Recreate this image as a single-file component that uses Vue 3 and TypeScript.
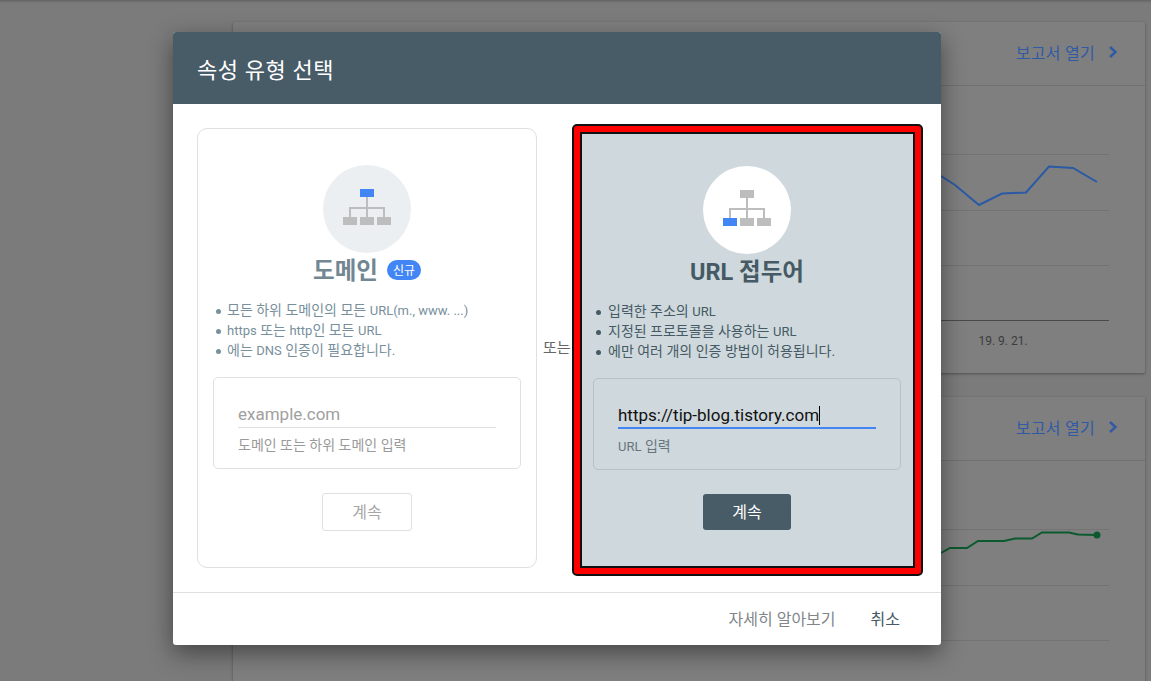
<template>
  <div class="page">
    <div class="report-card">
      <div class="report-head">
        <a class="open-link">보고서 열기</a>
        <svg class="chevron" width="12" height="14" viewBox="0 0 12 14"><path d="M3 2l5.5 5-5.5 5" /></svg>
      </div>
      <svg class="chart" width="912" height="287">
        <line v-for="y in gridLines" :key="y" x1="0" x2="876" :y1="y" :y2="y" class="grid" />
        <line x1="0" x2="876" y1="234.5" y2="234.5" class="axis" />
        <polyline :points="bluePoints" class="blue-line" />
        <text x="770" y="259" text-anchor="middle" class="date">19. 9. 21.</text>
      </svg>
    </div>

    <div class="report-card second">
      <div class="report-head">
        <a class="open-link">보고서 열기</a>
        <svg class="chevron" width="12" height="14" viewBox="0 0 12 14"><path d="M3 2l5.5 5-5.5 5" /></svg>
      </div>
      <svg class="chart" width="912" height="287">
        <line v-for="y in gridLines" :key="y" x1="0" x2="876" :y1="y" :y2="y" class="grid" />
        <polyline :points="greenPoints" class="green-line" />
        <circle cx="864" cy="74" r="3.5" class="green-dot" />
      </svg>
    </div>

    <div class="modal">
      <div class="modal-title">속성 유형 선택</div>
      <div class="modal-body">
        <div class="option">
          <div class="circle">
            <svg width="48" height="36" viewBox="0 0 48 36">
              <rect x="17" y="0" width="14" height="8" fill="#4285f4" />
              <path d="M24 8v20M7 28v-9h34v9" class="tree" />
              <rect x="0" y="28" width="14" height="8" fill="#bdbdbd" />
              <rect x="17" y="28" width="14" height="8" fill="#bdbdbd" />
              <rect x="34" y="28" width="14" height="8" fill="#bdbdbd" />
            </svg>
          </div>
          <div class="option-title">
            <span>도메인</span>
            <span class="badge">신규</span>
          </div>
          <ul class="points">
            <li>모든 하위 도메인의 모든 <span class="lat">URL(m., www. ...)</span></li>
            <li><span class="lat">https</span> 또는 <span class="lat">http</span>인 모든 <span class="lat">URL</span></li>
            <li>에는 <span class="lat">DNS</span> 인증이 필요합니다.</li>
          </ul>
          <div class="input-box">
            <div class="input-line placeholder">example.com</div>
            <div class="hint">도메인 또는 하위 도메인 입력</div>
          </div>
          <button class="continue" type="button">계속</button>
        </div>

        <div class="or">또는</div>

        <div class="marked">
          <div class="option selected">
            <div class="circle">
              <svg width="48" height="36" viewBox="0 0 48 36">
                <rect x="17" y="0" width="14" height="8" fill="#bdbdbd" />
                <path d="M24 8v20M7 28v-9h34v9" class="tree" />
                <rect x="0" y="28" width="14" height="8" fill="#4285f4" />
                <rect x="17" y="28" width="14" height="8" fill="#bdbdbd" />
                <rect x="34" y="28" width="14" height="8" fill="#bdbdbd" />
              </svg>
            </div>
            <div class="option-title">
              <span>URL 접두어</span>
            </div>
            <ul class="points">
              <li>입력한 주소의 <span class="lat">URL</span></li>
              <li>지정된 프로토콜을 사용하는 <span class="lat">URL</span></li>
              <li>에만 여러 개의 인증 방법이 허용됩니다.</li>
            </ul>
            <div class="input-box">
              <div class="input-line filled">https://tip-blog.tistory.com<span class="caret"></span></div>
              <div class="hint"><span class="lat">URL</span> 입력</div>
            </div>
            <button class="continue" type="button">계속</button>
          </div>
        </div>
      </div>
      <div class="modal-foot">
        <a class="learn">자세히 알아보기</a>
        <a class="cancel">취소</a>
      </div>
    </div>
  </div>
</template>

<script setup lang="ts">
type Point = [number, number];

const gridLines = [68.5, 124.5, 179.5];

// page coordinates of the visible part of each line
const blue: Point[] = [
  [941, 176], [955, 185], [979, 205], [1002, 193.5], [1026, 192.5], [1049, 166.5], [1073, 168], [1097, 182],
];
const green: Point[] = [
  [941, 553], [950, 548], [967, 548], [978, 541], [1004, 541], [1015, 538.5], [1032, 538.5], [1042, 532.5], [1069, 532.5], [1078, 534.5], [1097, 535],
];

function toChart(points: Point[], top: number): string {
  return points.map(([x, y]) => `${x - 233},${y - top}`).join(" ");
}

const bluePoints = toChart(blue, 86);
const greenPoints = toChart(green, 461);
</script>

<style>
html,
body {
  margin: 0;
  background: #7b7b7b;
}
</style>

<style scoped>
.page {
  position: relative;
  height: 681px;
  overflow: hidden;
  box-sizing: border-box;
  padding: 22px 6px 0 233px;
  background: #7b7b7b;
  box-shadow: inset 0 3px 3px -2px rgba(0, 0, 0, 0.25);
  font-family: Roboto, "Noto Sans CJK KR", sans-serif;
}

.report-card {
  height: 351px;
  margin-bottom: 24px;
  background: #7f7f7f;
  border-radius: 2px;
  box-shadow: 0 1px 3px rgba(0, 0, 0, 0.35);
}

.report-card.second {
  height: 400px;
}

.report-head {
  display: flex;
  align-items: center;
  justify-content: flex-end;
  gap: 12px;
  box-sizing: border-box;
  height: 64px;
  padding: 0 26px 3px 0;
  border-bottom: 1px solid #707070;
}

.open-link {
  font-size: 16px;
  letter-spacing: 0.3px;
  color: #2f5aa6;
}

.chevron path {
  fill: none;
  stroke: #2f5aa6;
  stroke-width: 2.4;
}

.chart {
  display: block;
}

.grid {
  stroke: #737373;
  stroke-width: 1;
}

.axis {
  stroke: #4a4a4a;
  stroke-width: 1;
}

.blue-line {
  fill: none;
  stroke: #2c59a5;
  stroke-width: 2;
}

.green-line {
  fill: none;
  stroke: #0b5a2f;
  stroke-width: 2;
}

.green-dot {
  fill: #0b5a2f;
}

.date {
  font-size: 12px;
  fill: #3c3c3c;
}

.modal {
  position: absolute;
  left: 173px;
  top: 32px;
  display: flex;
  flex-direction: column;
  width: 768px;
  height: 613px;
  background: #fff;
  border-radius: 3px;
  box-shadow: 0 8px 24px rgba(0, 0, 0, 0.45);
}

.modal-title {
  box-sizing: border-box;
  height: 72px;
  padding: 0 24px;
  border-radius: 3px 3px 0 0;
  background: #485c67;
  color: #fff;
  font-size: 22px;
  letter-spacing: 0.6px;
  line-height: 78px;
}

.modal-body {
  display: flex;
  align-items: flex-start;
  flex: 1;
  padding: 24px 18px 0 24px;
}

.option {
  display: flex;
  flex-direction: column;
  align-items: center;
  box-sizing: border-box;
  width: 340px;
  height: 440px;
  padding: 36px 15px 0;
  border: 1px solid #e0e0e0;
  border-radius: 10px;
}

.or {
  width: 35px;
  padding: 210px 0 0 6px;
  box-sizing: border-box;
  font-size: 15px;
  line-height: 20px;
  color: #666;
  white-space: nowrap;
}

.marked {
  box-sizing: border-box;
  width: 351px;
  height: 452px;
  margin: -4px 0 0;
  padding: 6px;
  background: #f00;
  border: 2px solid #111;
  border-radius: 5px;
}

.option.selected {
  width: 100%;
  height: 100%;
  padding: 32px 12px 0 11px;
  background: #cfd8dc;
  border: 2px solid #111;
  border-radius: 0;
}

.circle {
  display: flex;
  align-items: center;
  justify-content: center;
  flex: none;
  width: 88px;
  height: 88px;
  border-radius: 50%;
  background: #eceff1;
}

.circle svg {
  margin-bottom: 4px;
}

.selected .circle {
  background: #fff;
}

.tree {
  fill: none;
  stroke: #bdbdbd;
  stroke-width: 2;
}

.option-title {
  display: flex;
  align-items: center;
  gap: 9px;
  height: 30px;
  margin-top: 1px;
  font-size: 23.5px;
  font-weight: 700;
  color: #718792;
  white-space: nowrap;
}

.selected .option-title {
  color: #455a64;
}

.badge {
  display: flex;
  align-items: center;
  justify-content: center;
  width: 34px;
  height: 20px;
  margin-top: 1px;
  border-radius: 10px;
  background: #4285f4;
  color: #fff;
  font-size: 12px;
  font-weight: 400;
}

.points {
  align-self: stretch;
  margin: 16px 0 17px;
  padding: 0 0 0 14px;
  list-style: none;
  font-size: 14px;
  line-height: 20px;
  color: #78909c;
}

.points li {
  position: relative;
  height: 20px;
  white-space: nowrap;
}

.points li::before {
  content: "";
  position: absolute;
  left: -11px;
  top: 9px;
  width: 5px;
  height: 5px;
  border-radius: 50%;
  background: currentColor;
}

.selected .points {
  padding-left: 15px;
  color: #455a64;
}

.selected .points li::before {
  left: -12px;
}

.lat {
  font-size: 13px;
}

.input-box {
  align-self: stretch;
  box-sizing: border-box;
  height: 92px;
  padding: 24px 24px 0;
  border: 1px solid #e0e0e0;
  border-radius: 5px;
}

.selected .input-box {
  border-color: #b9c1c5;
}

.input-line {
  height: 25px;
  border-bottom: 1px solid #e0e0e0;
  font-size: 17px;
  line-height: 24px;
  white-space: nowrap;
}

.placeholder {
  color: #a0a0a0;
}

.filled {
  height: 24px;
  border-bottom: 2px solid #4285f4;
  color: #111;
}

.caret {
  display: inline-block;
  width: 1px;
  height: 19px;
  vertical-align: -4px;
  background: #000;
}

.hint {
  margin-top: 8px;
  font-size: 14px;
  line-height: 18px;
  color: #9a9a9a;
}

.selected .hint {
  color: #68757c;
}

.continue {
  flex: none;
  width: 90px;
  height: 38px;
  margin-top: 24px;
  padding: 0 0 3px;
  background: #fff;
  border: 1px solid #e0e0e0;
  border-radius: 3px;
  color: #a6a6a6;
  font-family: inherit;
  font-size: 16px;
}

.selected .continue {
  width: 88px;
  height: 36px;
  background: #485c67;
  border: none;
  color: #fff;
}

.modal-foot {
  display: flex;
  align-items: center;
  justify-content: flex-end;
  gap: 35px;
  box-sizing: border-box;
  height: 53px;
  padding: 0 41px 3px 0;
  border-top: 1px solid #e0e0e0;
  font-size: 16px;
}

.learn {
  color: #80868b;
}

.cancel {
  color: #455a64;
}
</style>
